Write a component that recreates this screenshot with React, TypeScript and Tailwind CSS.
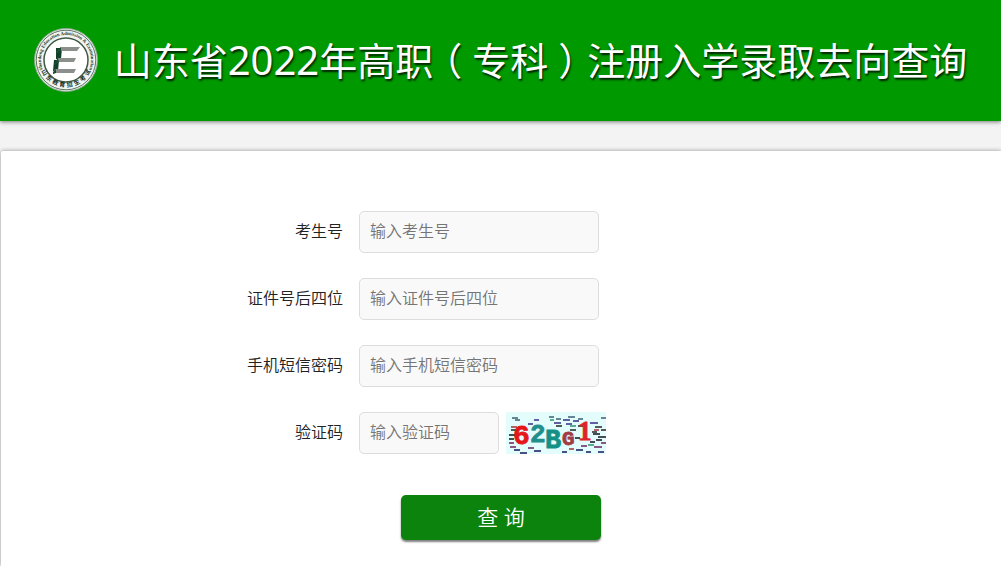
import type { ReactNode } from 'react';

function Seal() {
  return (
    <svg viewBox="0 0 64 64" className="size-16 shrink-0" role="img" aria-label="山东省教育招生考试院">
      <defs>
        <path id="seal-top" d="M9.6 43 A25 25 0 1 1 54.4 43" />
      </defs>
      <circle cx="32" cy="32" r="31.5" fill="#e9efe9" stroke="#8fa892" strokeWidth="1" />
      <circle cx="32" cy="32" r="29.8" fill="#f1f4f1" stroke="#4d6652" strokeWidth="0.9" />
      <circle cx="32" cy="32" r="22" fill="#fff" stroke="#405a46" strokeWidth="1.5" />
      <text fill="#24402c" fontSize="4.8" fontWeight="700" fontFamily="Liberation Serif, serif">
        <textPath href="#seal-top" startOffset="50%" textAnchor="middle">
          Shandong Education Admission &amp; Examination
        </textPath>
      </text>
      <g fill="#182f20" fontSize="6" fontWeight="700" fontFamily="Noto Sans CJK SC, sans-serif">
        {Array.from('山东教育招生考试').map((char, i) => (
          <text key={char} x="32" y="59" textAnchor="middle" transform={`rotate(${59.5 - i * 17} 32 32)`}>
            {char}
          </text>
        ))}
      </g>
      <path d="M22 20h6l-1 11h-5zM20 32h5l-1 11h-5z" fill="#12402a" />
      <path d="M27 19h19l-3 4H25zM24 30h18l-2 4H22zM21 41h21l-2 4H19z" fill="#8b908d" />
      <path d="M27 19l-5 4v3l5-3zM24 30l-3 4v3l4-3zM22 41l-3 3v2l3-1z" fill="#1d4a33" />
    </svg>
  );
}

const dashes = [
  'M6 6h6M9 8h5M43 5h5M62 5h7M50 7h5M72 7h5M95 6h5',
  'M28 8h5M57 8h7M67 9h6M48 11h7M60 12h6M84 11h8M22 12h5',
  'M89 15h7M50 14h6M72 14h5M5 18h5M95 18h5M86 20h5M64 18h6',
  'M3 23h6M87 22h7M92 25h8M69 26h5M3 27h5M90 28h6M84 30h5',
  'M3 31h5M95 31h5M75 34h6M4 35h6M88 35h8M22 36h6',
  'M8 38h6M28 39h7M70 38h7M80 40h5M14 41h7M92 40h6M56 40h5',
];
const dashColors = ['#3f5f73', '#3a2a86', '#252525', '#11131b', '#69235c', '#17175f'];

function Captcha() {
  return (
    <svg viewBox="0 0 100 42" className="h-[42px] w-[100px]" aria-label="验证码图片" role="img">
      <rect width="100" height="42" fill="#e3fcfc" />
      {dashes.map((d, i) => (
        <path key={d} d={d} stroke={dashColors[i]} strokeWidth="1.4" />
      ))}
      <path d="M64 14h6M44 8h4M82 33h6" stroke="#31906c" strokeWidth="1.3" />
      <path d="M5 15h6M88 18h5M63 37h5" stroke="#a13135" strokeWidth="1.3" />
      <g fontFamily="Liberation Mono, monospace" fontWeight="700" strokeWidth="0.8">
        <text x="7" y="32" fontSize="28" fill="#e5161b" stroke="#e5161b">6</text>
        <text x="24" y="30" fontSize="26" fill="#228e8c" stroke="#228e8c">2</text>
        <text x="39" y="36" fontSize="27" fill="#159087" stroke="#159087">B</text>
        <text x="56" y="33" fontSize="21" fill="#a13d42" stroke="#a13d42">G</text>
        <text x="72" y="28" fontSize="27" fill="#df2429" stroke="#df2429" fontFamily="Liberation Serif, serif">1</text>
      </g>
    </svg>
  );
}

type FieldProps = {
  id: string;
  label: string;
  short?: boolean;
  type?: string;
  children?: ReactNode;
};

function Field({ id, label, short, type = 'text', children }: FieldProps) {
  return (
    <div className="flex items-center">
      <label htmlFor={id} className="mr-4 w-24 shrink-0 pb-0.5 text-right">
        {label}
      </label>
      <input
        id={id}
        type={type}
        placeholder={`输入${label}`}
        className={`h-[42px] rounded-[5px] border border-[#ddd] bg-[#f9f9f9] px-2.5 pb-0.5 outline-none placeholder:text-[#757575] placeholder:opacity-100 focus:border-[#090] ${short ? 'w-[140px]' : 'w-60'}`}
      />
      {children}
    </div>
  );
}

function Paren({ children }: { children: string }) {
  return <span className="px-[10px] [font-feature-settings:'halt']">{children}</span>;
}

export default function App() {
  return (
    <div className="flex min-h-screen flex-col bg-[#f3f3f3] font-['Noto_Sans','Noto_Sans_CJK_SC',sans-serif] text-base font-[350] text-[#222]">
      <header className="flex items-center justify-center gap-4 bg-[#090] px-4 pt-7 pb-[29px] shadow-[0_1px_4px_rgba(0,0,0,0.5)]">
        <Seal />
        <h1 className="text-[38px] leading-16 font-normal text-white [text-shadow:1px_2px_2px_rgba(0,0,0,0.8)]">
          山东省<span className="text-[40px]">2022</span>年高职<Paren>（</Paren>专科<Paren>）</Paren>
          注册入学录取去向查询
        </h1>
      </header>
      <main className="mt-[30px] ml-px grow rounded-tl-xs bg-white px-4 pt-[60px] pb-6 shadow-[0_0_4px_rgba(0,0,0,0.4)]">
        <form className="mx-auto flex max-w-[508px] flex-col gap-[25px]" onSubmit={(e) => e.preventDefault()}>
          <Field id="candidate" label="考生号" />
          <Field id="idcard" label="证件号后四位" />
          <Field id="sms" label="手机短信密码" type="password" />
          <Field id="code" label="验证码" short>
            <button type="button" aria-label="更换验证码" className="ml-[7px] cursor-pointer">
              <Captcha />
            </button>
          </Field>
          <button
            type="submit"
            className="mt-4 h-[45px] w-50 cursor-pointer self-center rounded-[5px] bg-[#0c830c] text-[21px] text-white shadow-[0_2px_2px_rgba(0,0,0,0.5)]"
          >
            查 询
          </button>
        </form>
      </main>
    </div>
  );
}
